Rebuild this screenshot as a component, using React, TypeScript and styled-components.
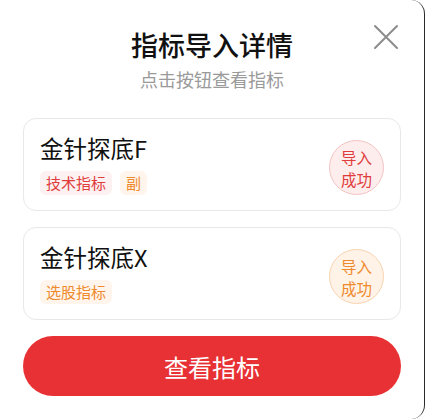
import React from 'react';
import styled, { createGlobalStyle } from 'styled-components';

const GlobalStyle = createGlobalStyle`
  html, body {
    margin: 0;
    padding: 0;
    background: #fff;
  }
  body {
    font-family: "Noto Sans CJK SC", "Noto Sans", sans-serif;
  }
`;

type Tone = 'red' | 'orange';

const tones = {
  red: { text: '#e03c3c', bg: '#fdf1f1', ring: '#f4c4c4', fill: '#fdeded' },
  orange: { text: '#ef8a2c', bg: '#fff5ec', ring: '#f8d3b0', fill: '#fff3e8' },
};

const Sheet = styled.div`
  position: relative;
  box-sizing: border-box;
  width: 425px;
  height: 419px;
  padding: 26px 23px 0 23px;
  background: #fff;
  border-right: 1px solid #2a2a2a;
  border-radius: 0 14px 14px 0;
  display: flex;
  flex-direction: column;
`;

const CloseButton = styled.button`
  position: absolute;
  top: 24px;
  right: 25px;
  width: 26px;
  height: 26px;
  padding: 0;
  border: none;
  background: transparent;
  cursor: pointer;
`;

const Header = styled.div`
  display: flex;
  flex-direction: column;
  align-items: center;
  margin-bottom: 27px;
`;

const Title = styled.h2`
  margin: 0;
  font-size: 27px;
  line-height: 37px;
  font-weight: 500;
  color: #111;
`;

const Subtitle = styled.p`
  margin: 4px 0 0;
  font-size: 18px;
  line-height: 24px;
  color: #9a9a9a;
`;

const List = styled.div`
  display: flex;
  flex-direction: column;
  gap: 16px;
`;

const Card = styled.div`
  box-sizing: border-box;
  height: 93px;
  padding: 15px 16px 15px 16px;
  border: 1px solid #e8e8e8;
  border-radius: 13px;
  display: flex;
  align-items: flex-end;
  justify-content: space-between;
`;

const CardBody = styled.div`
  display: flex;
  flex-direction: column;
`;

const CardTitle = styled.div`
  font-size: 23.5px;
  line-height: 30px;
  color: #111;
`;

const Tags = styled.div`
  display: flex;
  gap: 8px;
  margin-top: 8px;
`;

const Tag = styled.span<{ $tone: Tone }>`
  height: 24px;
  padding: 0 6px;
  border-radius: 6px;
  font-size: 15px;
  line-height: 24px;
  color: ${p => tones[p.$tone].text};
  background: ${p => tones[p.$tone].bg};
`;

const Badge = styled.div<{ $tone: Tone }>`
  box-sizing: border-box;
  width: 55px;
  height: 55px;
  border-radius: 50%;
  border: 1px solid ${p => tones[p.$tone].ring};
  background: ${p => tones[p.$tone].fill};
  color: ${p => tones[p.$tone].text};
  font-size: 15.5px;
  line-height: 22px;
  display: flex;
  align-items: center;
  justify-content: center;
  text-align: center;
`;

const ViewButton = styled.button`
  margin-top: 16px;
  height: 60px;
  border: none;
  border-radius: 30px;
  background: #e83134;
  color: #fff;
  font-family: inherit;
  font-size: 24px;
  cursor: pointer;
`;

const items = [
  { name: '金针探底F', tags: [{ label: '技术指标', tone: 'red' as Tone }, { label: '副', tone: 'orange' as Tone }], tone: 'red' as Tone },
  { name: '金针探底X', tags: [{ label: '选股指标', tone: 'orange' as Tone }], tone: 'orange' as Tone },
];

const App: React.FC = () => (
  <>
    <GlobalStyle />
    <Sheet>
      <CloseButton aria-label="关闭">
        <svg width="26" height="26" viewBox="0 0 26 26">
          <path d="M2 2 L24 24 M24 2 L2 24" stroke="#8c8c8c" strokeWidth="2" strokeLinecap="round" />
        </svg>
      </CloseButton>
      <Header>
        <Title>指标导入详情</Title>
        <Subtitle>点击按钮查看指标</Subtitle>
      </Header>
      <List>
        {items.map(item => (
          <Card key={item.name}>
            <CardBody>
              <CardTitle>{item.name}</CardTitle>
              <Tags>
                {item.tags.map(t => (
                  <Tag key={t.label} $tone={t.tone}>{t.label}</Tag>
                ))}
              </Tags>
            </CardBody>
            <Badge $tone={item.tone}>导入<br />成功</Badge>
          </Card>
        ))}
      </List>
      <ViewButton>查看指标</ViewButton>
    </Sheet>
  </>
);

export default App;
